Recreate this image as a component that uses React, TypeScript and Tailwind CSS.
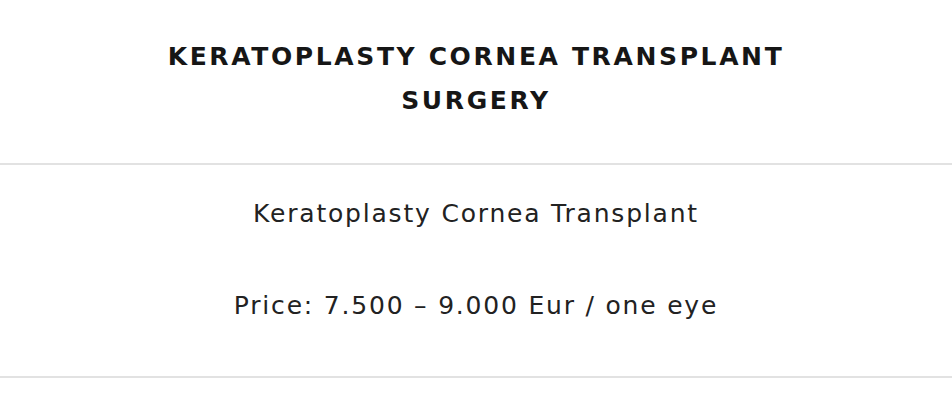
export default function App() {
  return (
    <main className="w-[952px] h-[400px] bg-white font-['DejaVu_Sans',sans-serif] text-[#1c1c1c] overflow-hidden">
      <header className="pt-[35px] pb-[40px] flex justify-center">
        <h1 className="w-[680px] text-center text-[25px] leading-[44px] font-bold tracking-[0.105em] text-[#161616]">
          KERATOPLASTY CORNEA TRANSPLANT SURGERY
        </h1>
      </header>
      <div className="border-t-2 border-[#e2e2e2]" />
      <section className="flex flex-col items-center pt-[32px] pb-[53px] gap-[58px] text-[25px] leading-[34px] tracking-[1.8px] text-[#222]">
        <p>Keratoplasty Cornea Transplant</p>
        <p>Price: 7.500 – 9.000 Eur / one eye</p>
      </section>
      <div className="border-t-2 border-[#e2e2e2]" />
    </main>
  );
}
